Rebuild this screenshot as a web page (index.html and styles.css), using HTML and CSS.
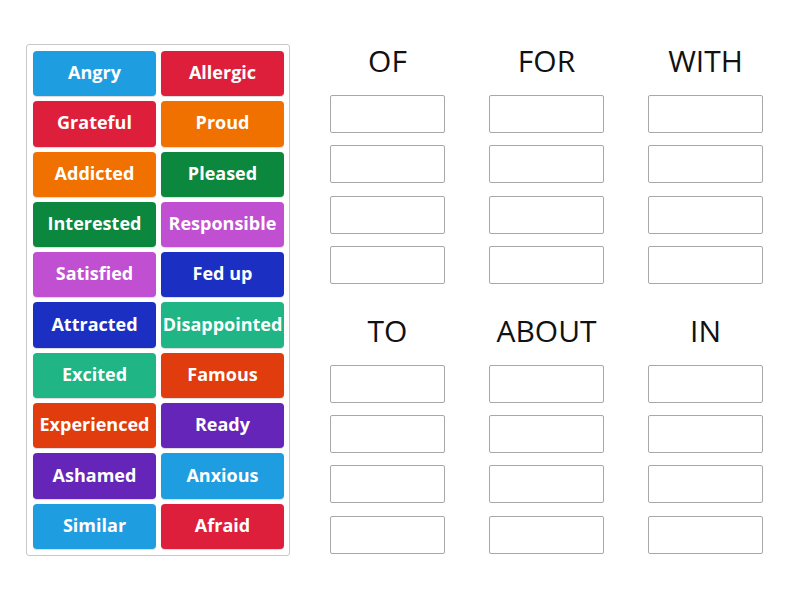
FILE: index.html
```html
<!DOCTYPE html>
<html lang="en">
<head>
  <meta charset="UTF-8">
  <title>Group sort</title>
  <link rel="stylesheet" href="styles.css">
</head>
<body>
  <div class="page">
    <div class="tray">
      <div class="tile blue">Angry</div>
      <div class="tile red">Allergic</div>
      <div class="tile red">Grateful</div>
      <div class="tile orange">Proud</div>
      <div class="tile orange">Addicted</div>
      <div class="tile green">Pleased</div>
      <div class="tile green">Interested</div>
      <div class="tile magenta">Responsible</div>
      <div class="tile magenta">Satisfied</div>
      <div class="tile navy">Fed up</div>
      <div class="tile navy">Attracted</div>
      <div class="tile teal">Disappointed</div>
      <div class="tile teal">Excited</div>
      <div class="tile rust">Famous</div>
      <div class="tile rust">Experienced</div>
      <div class="tile purple">Ready</div>
      <div class="tile purple">Ashamed</div>
      <div class="tile blue">Anxious</div>
      <div class="tile blue">Similar</div>
      <div class="tile red">Afraid</div>
    </div>

    <div class="groups">
      <div class="group">
        <div class="col">
          <h2>OF</h2>
          <div class="slot"></div><div class="slot"></div><div class="slot"></div><div class="slot"></div>
        </div>
        <div class="col">
          <h2>FOR</h2>
          <div class="slot"></div><div class="slot"></div><div class="slot"></div><div class="slot"></div>
        </div>
        <div class="col">
          <h2>WITH</h2>
          <div class="slot"></div><div class="slot"></div><div class="slot"></div><div class="slot"></div>
        </div>
      </div>
      <div class="group">
        <div class="col">
          <h2>TO</h2>
          <div class="slot"></div><div class="slot"></div><div class="slot"></div><div class="slot"></div>
        </div>
        <div class="col">
          <h2>ABOUT</h2>
          <div class="slot"></div><div class="slot"></div><div class="slot"></div><div class="slot"></div>
        </div>
        <div class="col">
          <h2>IN</h2>
          <div class="slot"></div><div class="slot"></div><div class="slot"></div><div class="slot"></div>
        </div>
      </div>
    </div>
  </div>
</body>
</html>
```

FILE: styles.css
```css
body {
  margin: 0;
  background: #fff;
  font-family: "Open Sans", Arial, sans-serif;
}
.page {
  display: flex;
  align-items: flex-start;
  padding: 44px 0 0 26px;
}
.tray {
  display: grid;
  grid-template-columns: 123px 123px;
  grid-auto-rows: 45.3px;
  column-gap: 5px;
  row-gap: 5px;
  padding: 6px 5px 6px 6px;
  border: 1px solid #c8c8c8;
  border-radius: 3px;
}
.tile {
  display: flex;
  align-items: center;
  justify-content: center;
  padding-bottom: 3px;
  box-sizing: border-box;
  border-radius: 4px;
  color: #fff;
  font-size: 18px;
  font-weight: 700;
  white-space: nowrap;
  box-shadow: 0 1px 1px rgba(0, 0, 0, 0.15);
}
.blue { background: #1f9de1; }
.red { background: #dd1f3b; }
.orange { background: #f07000; }
.green { background: #0b873e; }
.magenta { background: #c04fd1; }
.navy { background: #1b30c2; }
.teal { background: #1fb584; }
.rust { background: #e03c0e; }
.purple { background: #6425b8; }

.groups {
  margin-left: 40px;
  margin-top: -16px;
}
.group {
  display: flex;
  gap: 44px;
  margin-bottom: 14px;
}
.col {
  width: 115px;
  display: flex;
  flex-direction: column;
  gap: 12.3px;
}
.col h2 {
  margin: 0 0 -11.3px;
  height: 66px;
  line-height: 66px;
  text-align: center;
  font-size: 30px;
  font-weight: 400;
  color: #111;
}
.slot {
  height: 38px;
  box-sizing: border-box;
  border: 1px solid #a8a8a8;
  border-radius: 2px;
}
```
